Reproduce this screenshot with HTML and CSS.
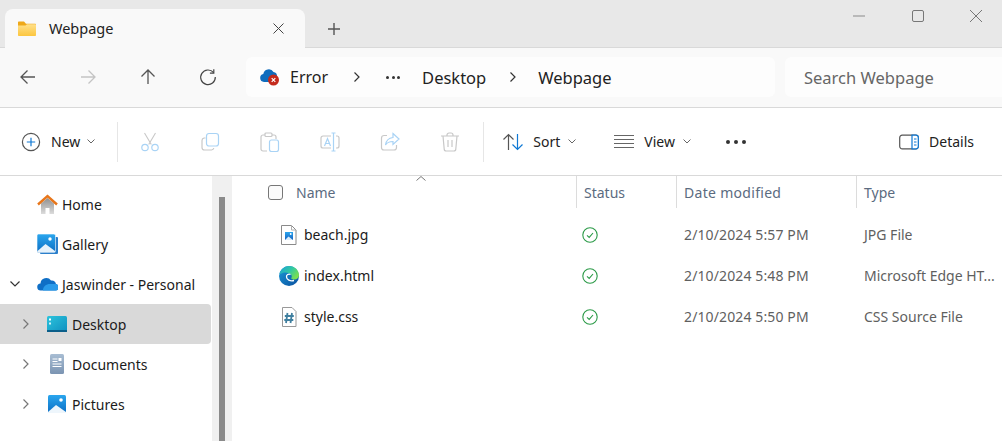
FILE: index.html
```html
<!DOCTYPE html>
<html lang="en">
<head>
<meta charset="utf-8">
<title>Webpage - File Explorer</title>
<link rel="stylesheet" href="styles.css">
</head>
<body>
<div class="window">
  <header class="titlebar">
    <div class="tab">
      <svg class="tab-icon" width="20" height="16" viewBox="0 0 20 16"><defs><linearGradient id="fold" x1="0" y1="0" x2="0" y2="1"><stop offset="0" stop-color="#ffe08a"/><stop offset="1" stop-color="#fcc63f"/></linearGradient></defs><path d="M1 1.500C1 .9 1.400.5 2 .5h5l2 2.200h9c.6 0 1 .4 1 1V5H1z" fill="#eea81a"/><path d="M1 4.500h7.500L10 3.300h8c.6 0 1 .4 1 1V14c0 .6-.4 1-1 1H2c-.6 0-1-.4-1-1z" fill="url(#fold)"/></svg>
      <span class="tab-title">Webpage</span>
      <svg class="tab-close" width="11" height="11" viewBox="0 0 11 11"><path d="M.5.500l10 10M10.500.5l-10 10" stroke="#444" stroke-width="1" fill="none"/></svg>
    </div>
    <svg class="tab-new" width="14" height="14" viewBox="0 0 14 14"><path d="M7 1v12M1 7h12" stroke="#555" stroke-width="1.400" fill="none"/></svg>
    <div class="window-controls">
      <svg width="12" height="12" viewBox="0 0 12 12"><path d="M0 6h12" stroke="#8a8a8a" fill="none"/></svg>
      <svg width="12" height="12" viewBox="0 0 12 12"><rect x=".5" y=".5" width="11" height="11" rx="1.500" stroke="#777" fill="none"/></svg>
      <svg width="12" height="12" viewBox="0 0 12 12"><path d="M0 0l12 12M12 0L0 12" stroke="#777" fill="none"/></svg>
    </div>
  </header>

  <nav class="navbar">
    <div class="nav-buttons">
      <svg width="20" height="20" viewBox="0 0 20 20"><path d="M17 10H3M9.500 3.500L3 10l6.500 6.500" stroke="#555" stroke-width="1.300" fill="none"/></svg>
      <svg width="20" height="20" viewBox="0 0 20 20"><path d="M3 10h14M10.500 3.500L17 10l-6.500 6.500" stroke="#c4c4c4" stroke-width="1.300" fill="none"/></svg>
      <svg width="20" height="20" viewBox="0 0 20 20"><path d="M10 17V3M3.500 9.500L10 3l6.500 6.500" stroke="#555" stroke-width="1.300" fill="none"/></svg>
      <svg width="20" height="20" viewBox="0 0 20 20"><path d="M15.600 5.600A7.300 7.300 0 1 0 17.300 10" stroke="#444" stroke-width="1.200" fill="none"/><path d="M15.800 2.200v3.900h-3.900" stroke="#444" stroke-width="1.200" fill="none"/></svg>
    </div>
    <div class="address">
      <svg class="addr-cloud" width="22" height="20" viewBox="0 0 22 20"><path d="M5 15a4 4 0 0 1-.7-7.900A5.500 5.500 0 0 1 14.500 5a4 4 0 0 1 3.500 4l-4 6z" fill="#0f6cbd"/><circle cx="14.500" cy="13" r="5.500" fill="#c42b1c"/><path d="M12.700 11.200l3.600 3.600M16.300 11.200l-3.600 3.600" stroke="#fff" stroke-width="1.200"/></svg>
      <span class="crumb crumb-error">Error</span>
      <svg class="crumb-sep crumb-sep-first" width="8" height="12" viewBox="0 0 8 12"><path d="M1.500 1.500L6 6l-4.500 4.500" stroke="#333" stroke-width="1.200" fill="none"/></svg>
      <span class="crumb-dots"><i></i><i></i><i></i></span>
      <span class="crumb crumb-desktop">Desktop</span>
      <svg class="crumb-sep" width="8" height="12" viewBox="0 0 8 12"><path d="M1.500 1.500L6 6l-4.500 4.500" stroke="#333" stroke-width="1.200" fill="none"/></svg>
      <span class="crumb crumb-last">Webpage</span>
    </div>
    <div class="search">Search Webpage</div>
  </nav>

  <section class="toolbar">
    <div class="tool tool-new">
      <svg width="20" height="20" viewBox="0 0 20 20"><circle cx="10" cy="10" r="8.600" stroke="#555" stroke-width="1.200" fill="none"/><path d="M10 5.800v8.400M5.800 10h8.400" stroke="#0f78d4" stroke-width="1.200"/></svg>
      <span>New</span>
      <svg class="chev" width="8" height="5" viewBox="0 0 8 5"><path d="M.5.500L4 4 7.500.5" stroke="#666" fill="none"/></svg>
    </div>
    <div class="divider divider-a"></div>
    <div class="tool-group">
      <svg width="20" height="20" viewBox="0 0 20 20"><path d="M4.500 1l6.800 11.500M15.500 1L8.700 12.500" stroke="#c8c8c8" stroke-width="1.100" fill="none"/><circle cx="5" cy="15.500" r="3.200" stroke="#a9d3f5" stroke-width="1.200" fill="none"/><circle cx="15" cy="15.500" r="3.200" stroke="#a9d3f5" stroke-width="1.200" fill="none"/></svg>
      <svg width="20" height="20" viewBox="0 0 20 20"><path d="M5.500 6H4a2.500 2.500 0 0 0-2 2.500v7A2.500 2.500 0 0 0 4.500 18h7a2.500 2.500 0 0 0 2.300-2" stroke="#c8c8c8" stroke-width="1.200" fill="none"/><rect x="6.500" y="1.500" width="12" height="12.500" rx="2.500" stroke="#a9d3f5" stroke-width="1.200" fill="none"/></svg>
      <svg width="20" height="20" viewBox="0 0 20 20"><path d="M7 19H3a2 2 0 0 1-2-2V5a2 2 0 0 1 2-2h11a2 2 0 0 1 2 2v2" stroke="#c8c8c8" stroke-width="1.200" fill="none"/><rect x="5" y="1" width="7" height="3.500" rx="1" stroke="#c8c8c8" stroke-width="1.200" fill="#fff"/><rect x="9.500" y="8" width="9" height="11.500" rx="2" stroke="#a9d3f5" stroke-width="1.200" fill="none"/></svg>
      <svg width="20" height="20" viewBox="0 0 20 20"><path d="M11 4H3a2 2 0 0 0-2 2v8a2 2 0 0 0 2 2h8M16 4h1a2 2 0 0 1 2 2v8a2 2 0 0 1-2 2h-1" stroke="#c8c8c8" stroke-width="1.200" fill="none"/><path d="M4.500 14L7.500 6.500 10.500 14M5.500 11.500h4" stroke="#a9d3f5" stroke-width="1.200" fill="none"/><path d="M11.500 1h4M13.500 1v18M11.500 19h4" stroke="#a9d3f5" stroke-width="1.200" fill="none"/></svg>
      <svg width="20" height="20" viewBox="0 0 20 20"><path d="M7 3.500H4a2.500 2.500 0 0 0-2.500 2.500v9.500A2.500 2.500 0 0 0 4 18h10a2.500 2.500 0 0 0 2.500-2.500V13" stroke="#c8c8c8" stroke-width="1.200" fill="none"/><path d="M13 1.500l6 5.500-6 5.500V9.500c-4 0-6 1-7.500 3.500.5-4 3-7 7.500-7.500z" stroke="#a9d3f5" stroke-width="1.200" fill="none"/></svg>
      <svg width="20" height="20" viewBox="0 0 20 20"><path d="M1 4h18M7 4V3a2 2 0 0 1 2-2h2a2 2 0 0 1 2 2v1M3 4l1.200 13a2 2 0 0 0 2 2h7.600a2 2 0 0 0 2-2L17 4M8 8v7M12 8v7" stroke="#c8c8c8" stroke-width="1.200" fill="none"/></svg>
    </div>
    <div class="divider divider-b"></div>
    <div class="tool tool-sort">
      <svg width="20" height="20" viewBox="0 0 20 20"><path d="M5.500 18V2.500M.5 7.500l5-5 5 5" stroke="#555" stroke-width="1.200" fill="none"/><path d="M14.500 2v15.500M9.500 12.500l5 5 5-5" stroke="#0f78d4" stroke-width="1.200" fill="none"/></svg>
      <span>Sort</span>
      <svg class="chev" width="8" height="5" viewBox="0 0 8 5"><path d="M.5.500L4 4 7.500.5" stroke="#666" fill="none"/></svg>
    </div>
    <div class="tool tool-view">
      <svg width="20" height="20" viewBox="0 0 20 20"><path d="M0 3.500h20M0 7.500h20M0 11.500h20M0 15.500h20" stroke="#666" stroke-width="1.200" fill="none"/></svg>
      <span>View</span>
      <svg class="chev" width="8" height="5" viewBox="0 0 8 5"><path d="M.5.500L4 4 7.500.5" stroke="#666" fill="none"/></svg>
    </div>
    <div class="tool-more"><i></i><i></i><i></i></div>
    <div class="tool tool-details">
      <svg width="20" height="16" viewBox="0 0 20 16"><rect x=".7" y="1.200" width="18.600" height="13.600" rx="2.500" stroke="#555" stroke-width="1.200" fill="none"/><path d="M13 1.200h3.800a2.500 2.500 0 0 1 2.500 2.500v8.600a2.500 2.500 0 0 1-2.500 2.500H13z" stroke="#0f78d4" stroke-width="1.200" fill="#fff"/><path d="M15 5h2.500M15 8h2.500M15 11h2.500" stroke="#0f78d4" stroke-width="1"/></svg>
      <span>Details</span>
    </div>
  </section>

  <main class="body">
    <aside class="sidebar">
      <div class="side-row">
        <svg width="21" height="21" viewBox="0 0 21 21"><defs><linearGradient id="house" x1="0" y1="0" x2="0" y2="1"><stop offset="0" stop-color="#8f8f8f"/><stop offset="1" stop-color="#dcdcdc"/></linearGradient></defs><path d="M4 9.500L10.500 4 17 9.500V20h-4.500v-6h-4v6H4z" fill="url(#house)"/><path d="M1 10.500L10.500 2 20 10.500" stroke="#e8761a" stroke-width="2.400" fill="none"/></svg>
        <span class="side-label">Home</span>
      </div>
      <div class="side-row">
        <svg width="21" height="21" viewBox="0 0 21 21"><defs><linearGradient id="gal" x1="0" y1="0" x2="0" y2="1"><stop offset="0" stop-color="#2aa6ee"/><stop offset="1" stop-color="#0d6fc4"/></linearGradient></defs><rect x="3" y="3" width="18" height="17" rx="1" fill="#2b7fcb"/><rect x="0" y="0" width="18.500" height="18.500" rx="1.500" fill="url(#gal)" stroke="#fff" stroke-width=".6"/><path d="M.5 17l8-7 9.500 7v1H.5z" fill="#e6f2fb"/><circle cx="13" cy="5" r="1.700" fill="#fff"/></svg>
        <span class="side-label">Gallery</span>
      </div>
      <div class="side-row">
        <svg class="side-chev side-chev-open" width="10" height="6" viewBox="0 0 10 6"><path d="M.5.500L5 5 9.500.5" stroke="#333" stroke-width="1.200" fill="none"/></svg>
        <svg width="21" height="14" viewBox="0 0 21 14"><path d="M4 13.500a3.500 3.500 0 0 1-.5-7A5.800 5.800 0 0 1 14 3.500a4.500 4.500 0 0 1 5 3.500 3.300 3.300 0 0 1-.5 6.500z" fill="#0f6fc6"/><path d="M6 13.500c0-4 3-6.500 7-6.500h6a3.300 3.300 0 0 1-.5 6.500z" fill="#2a9bea"/></svg>
        <span class="side-label">Jaswinder - Personal</span>
      </div>
      <div class="side-row child selected">
        <svg class="side-chev" width="6" height="10" viewBox="0 0 6 10"><path d="M.5.500L5 5 .5 9.500" stroke="#777" stroke-width="1.200" fill="none"/></svg>
        <svg width="20" height="16" viewBox="0 0 20 16"><defs><linearGradient id="desk" x1="0" y1="0" x2="1" y2="1"><stop offset="0" stop-color="#2cc4dc"/><stop offset="1" stop-color="#0f8fc0"/></linearGradient></defs><rect width="20" height="16" rx="1.500" fill="url(#desk)"/><rect y="14" width="20" height="2" fill="#0b5f8a"/><rect x="2" y="2.500" width="2" height="2" fill="#fff"/><rect x="2" y="6.500" width="2" height="2" fill="#d4f2fa"/></svg>
        <span class="side-label">Desktop</span>
      </div>
      <div class="side-row child">
        <svg class="side-chev" width="6" height="10" viewBox="0 0 6 10"><path d="M.5.500L5 5 .5 9.500" stroke="#777" stroke-width="1.200" fill="none"/></svg>
        <svg width="20" height="20" viewBox="0 0 20 20"><defs><linearGradient id="docs" x1="0" y1="0" x2="0" y2="1"><stop offset="0" stop-color="#a8bdd3"/><stop offset="1" stop-color="#7b94b2"/></linearGradient></defs><rect x="3" y="0" width="14" height="20" rx="1.500" fill="url(#docs)"/><path d="M5.500 5h5M5.500 7.500h5M5.500 10h9M5.500 12.500h9" stroke="#fff" stroke-width="1"/><rect x="11.500" y="4" width="3" height="3" fill="#fff"/></svg>
        <span class="side-label">Documents</span>
      </div>
      <div class="side-row child">
        <svg class="side-chev" width="6" height="10" viewBox="0 0 6 10"><path d="M.5.500L5 5 .5 9.500" stroke="#777" stroke-width="1.200" fill="none"/></svg>
        <svg width="20" height="19" viewBox="0 0 20 19"><defs><linearGradient id="pics" x1="0" y1="0" x2="0" y2="1"><stop offset="0" stop-color="#2aa6ee"/><stop offset="1" stop-color="#0d6fc4"/></linearGradient></defs><rect x="1" y="0" width="18" height="18" rx="1.500" fill="url(#pics)"/><path d="M1 17l8-7 10 7v1H1z" fill="#eef6fc"/><circle cx="14" cy="5" r="1.800" fill="#fff"/></svg>
        <span class="side-label">Pictures</span>
      </div>
    </aside>
    <div class="scrollbar"><div class="scroll-thumb"></div></div>
    <div class="files">
      <svg class="sort-caret" width="10" height="5" viewBox="0 0 10 5"><path d="M.5 4.500L5 .5l4.500 4" stroke="#777" fill="none"/></svg>
      <div class="cols cols-head">
        <div class="col-name"><span class="checkbox"></span><span>Name</span></div>
        <div class="col-rule">Status</div>
        <div class="col-rule col-date">Date modified</div>
        <div class="col-rule">Type</div>
      </div>
      <div class="cols file-row">
        <div class="file-name">
          <svg width="20" height="20" viewBox="0 0 20 20"><defs><linearGradient id="jpg" x1="0" y1="0" x2="0" y2="1"><stop offset="0" stop-color="#2aa6ee"/><stop offset="1" stop-color="#1560c0"/></linearGradient></defs><path d="M2.500 .5h10l4.500 4.500v14.500H2.500z" fill="#fff" stroke="#8a8a8a"/><path d="M12.500 .5v4.500H17" fill="none" stroke="#b0b0b0"/><rect x="6" y="7" width="8" height="8" fill="url(#jpg)"/><path d="M6 15l3.500-3.500L14 15z" fill="#d7ebfa"/><circle cx="11.700" cy="9" r=".9" fill="#fff"/></svg>
          <span>beach.jpg</span>
        </div>
        <div class="status"><svg width="16" height="16" viewBox="0 0 16 16"><circle cx="8" cy="8" r="7.200" stroke="#2b9a47" stroke-width="1.100" fill="none"/><path d="M5 8.300l2.200 2.100L11 6" stroke="#2b9a47" stroke-width="1.100" fill="none"/></svg></div>
        <div class="meta meta-date">2/10/2024 5:57 PM</div>
        <div class="meta">JPG File</div>
      </div>
      <div class="cols file-row">
        <div class="file-name">
          <svg width="20" height="20" viewBox="0 0 20 20"><defs><linearGradient id="edgeb" x1="0" y1="0" x2="1" y2="1"><stop offset="0" stop-color="#1a9ad8"/><stop offset="1" stop-color="#0a4f9e"/></linearGradient><linearGradient id="edgeg" x1="0" y1="0" x2="1" y2=".6"><stop offset="0" stop-color="#1aa0d8"/><stop offset=".55" stop-color="#30c8a4"/><stop offset="1" stop-color="#7ce04e"/></linearGradient></defs><circle cx="10" cy="10" r="10" fill="url(#edgeb)"/><path d="M.4 8C1.800 3 5.800 0 10 0c6 0 10 4.500 10 9.300 0 2.700-2 4.200-4.500 4.200-1.500 0-3-.4-3.500-1.200 1-1 1.100-2.600 0-3.800C10.500 6.500 6 5.900 3.500 6.900 2 7.500 1 8.200.4 8z" fill="url(#edgeg)"/><path d="M11.500 8.500C9.500 7.500 7.300 8.800 7.500 11c.2 2.500 3.500 4.500 7.500 3.500" stroke="#fff" stroke-width="1.300" fill="none"/></svg>
          <span>index.html</span>
        </div>
        <div class="status"><svg width="16" height="16" viewBox="0 0 16 16"><circle cx="8" cy="8" r="7.200" stroke="#2b9a47" stroke-width="1.100" fill="none"/><path d="M5 8.300l2.200 2.100L11 6" stroke="#2b9a47" stroke-width="1.100" fill="none"/></svg></div>
        <div class="meta meta-date">2/10/2024 5:48 PM</div>
        <div class="meta">Microsoft Edge HT...</div>
      </div>
      <div class="cols file-row">
        <div class="file-name">
          <svg width="20" height="20" viewBox="0 0 20 20"><path d="M3.500 .5h9.500l4 4V19.500H3.500z" fill="#fff" stroke="#999"/><path d="M8.500 6L7 16M13 6l-1.500 10M5.800 9h9M5.300 13h9" stroke="#3f7f9f" stroke-width="1.800" fill="none"/></svg>
          <span>style.css</span>
        </div>
        <div class="status"><svg width="16" height="16" viewBox="0 0 16 16"><circle cx="8" cy="8" r="7.200" stroke="#2b9a47" stroke-width="1.100" fill="none"/><path d="M5 8.300l2.200 2.100L11 6" stroke="#2b9a47" stroke-width="1.100" fill="none"/></svg></div>
        <div class="meta meta-date">2/10/2024 5:50 PM</div>
        <div class="meta">CSS Source File</div>
      </div>
    </div>
  </main>
</div>
</body>
</html>
```
FILE: styles.css
```css
* { box-sizing: border-box; }
html, body { margin: 0; height: 100%; overflow: hidden; }
body { font-family: "Noto Sans", "Open Sans", sans-serif; color: #1b1b1b; background: #fff; }
svg { display: block; flex: none; }

.window { width: 1002px; height: 441px; display: flex; flex-direction: column; overflow: hidden; }

.titlebar { height: 48px; flex: none; display: flex; align-items: flex-start; background: #e8e8e8; border-bottom: 1px solid #d9d9d9; padding: 9px 0 0 5px; }
.tab { width: 300px; height: 39px; background: #f9f9f9; border-radius: 8px 8px 0 0; display: flex; align-items: center; padding: 0 0 0 12px; }
.tab-title { font-size: 14.500px; margin-left: 12px; padding-bottom: 2px; flex: 1; color: #222; }
.tab-close { margin-right: 21px; }
.tab-new { margin: 13px 0 0 22px; }
.window-controls { margin-left: auto; display: flex; gap: 46.500px; padding: 2px 20px 0 0; margin-top: -1px; }

.navbar { height: 60px; flex: none; display: flex; align-items: center; background: #f9f9f9; border-bottom: 1px solid #d9d9d9; padding: 0 0 1px 18px; }
.nav-buttons { display: flex; gap: 40px; }
.address { width: 529px; height: 40px; margin-left: 28px; background: #fdfdfd; border-radius: 6px; display: flex; align-items: center; padding-left: 13px; }
.crumb { font-size: 16.500px; color: #222; }
.crumb-error { font-size: 16px; margin-left: 9px; }
.crumb-sep-first { margin-left: 25px; }
.crumb-dots { display: flex; gap: 2.500px; margin-left: 25px; }
.crumb-dots i { width: 3px; height: 3px; border-radius: 50%; background: #333; }
.crumb-desktop { margin-left: 22px; margin-right: 23px; }
.crumb-last { margin-left: 21px; }
.search { width: 217px; height: 40px; margin-left: 10px; background: #fdfdfd; border-radius: 6px 0 0 6px; display: flex; align-items: center; padding-left: 19px; font-size: 16.500px; color: #666; }

.toolbar { height: 68px; flex: none; display: flex; align-items: center; background: #fff; border-bottom: 1px solid #d9d9d9; padding-left: 21px; }
.tool { display: flex; align-items: center; font-size: 14px; color: #222; }
.tool > span { margin-left: 10px; }
.tool .chev { margin-left: 7px; }
.divider { width: 1px; height: 40px; background: #e6e6e6; }
.divider-a { margin-left: 22px; }
.tool-group { display: flex; gap: 40px; margin-left: 22px; }
.divider-b { margin-left: 23px; }
.tool-sort { margin-left: 19px; }
.tool-sort .chev { margin-left: 8px; }
.tool-view { margin-left: 38px; }
.tool-view .chev { margin-left: 8px; }
.tool-more { display: flex; gap: 4px; margin-left: 35px; }
.tool-more i { width: 4px; height: 4px; border-radius: 50%; background: #333; }
.tool-details { margin-left: auto; margin-right: 28px; }

.body { flex: 1; min-height: 0; display: flex; }
.sidebar { width: 212px; flex: none; padding-top: 8px; }
.side-row { height: 40px; display: flex; align-items: center; padding-left: 37px; position: relative; font-size: 14px; color: #1b1b1b; }
.side-row .side-label { margin-left: 4px; }
.side-row.child { padding-left: 47px; }
.side-row.child .side-label { margin-left: 5px; }
.side-chev { position: absolute; left: 23px; top: 15px; }
.side-chev-open { left: 10px; top: 17px; }
.selected { background: #d9d9d9; border-radius: 0 4px 4px 0; margin-right: 1px; }

.scrollbar { width: 20px; flex: none; background: #f0f0f0; padding: 21px 7px 0; }
.scroll-thumb { height: 100%; background: #8a8a8a; }

.files { flex: 1; min-width: 0; position: relative; }
.sort-caret { position: absolute; left: 184px; top: 0; }
.cols { display: grid; grid-template-columns: 344px 100px 180px 1fr; align-items: center; }
.cols-head { height: 32px; font-size: 14px; color: #5b6b80; }
.col-name { display: flex; align-items: center; padding-left: 36px; gap: 13px; }
.checkbox { width: 15px; height: 15px; border: 1px solid #777; border-radius: 3px; background: #fbfbfb; }
.col-rule { height: 32px; display: flex; align-items: center; padding-left: 7px; border-left: 1px solid #dcdcdc; }
.col-date { letter-spacing: .3px; }
.file-row { height: 41px; font-size: 14px; }
.cols-head + .file-row { margin-top: 6px; }
.file-name { display: flex; align-items: center; padding-left: 47px; gap: 5px; color: #1b1b1b; }
.status { padding-left: 6px; }
.meta { padding-left: 8px; color: #5f5f5f; white-space: nowrap; }
.meta-date { letter-spacing: .12px; }
```
